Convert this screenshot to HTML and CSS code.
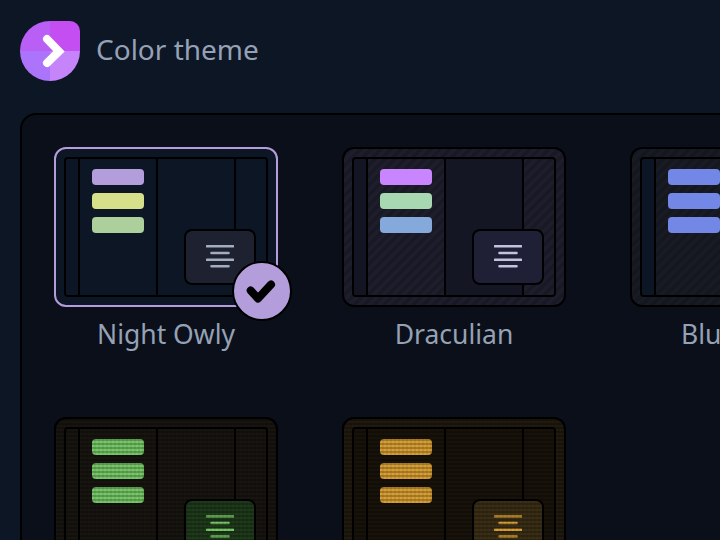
FILE: index.html
```html
<!DOCTYPE html>
<html lang="en">
<head>
    <meta charset="UTF-8">
    <meta name="viewport" content="width=device-width, initial-scale=1.0">
    <title>Color theme</title>
    <link rel="stylesheet" href="styles.css">
</head>
<body>

    <svg class="sprite" width="0" height="0">
        <symbol id="menu-lines" viewBox="0 0 28 24">
            <path d="M1 1.3H27M5.5 8H22.5M1 14.7H27M5.5 21.3H22.5" fill="none" stroke="currentColor" stroke-width="2.6" stroke-linecap="round"/>
        </symbol>
    </svg>

    <header class="header">
        <svg class="logo" width="60" height="60" viewBox="0 0 60 60">
            <defs>
                <clipPath id="logo-shape">
                    <path d="M30 0H50A10 10 0 0 1 60 10V30A30 30 0 0 1 0 30A30 30 0 0 1 30 0Z"/>
                </clipPath>
            </defs>
            <g clip-path="url(#logo-shape)">
                <rect width="30" height="30" fill="#b95ff5"/>
                <rect x="30" width="30" height="30" fill="#c44ef2"/>
                <rect y="30" width="30" height="30" fill="#ab74fb"/>
                <rect x="30" y="30" width="30" height="30" fill="#c684fa"/>
            </g>
            <path d="M27 18L39 30.5L27 42" fill="none" stroke="#fff" stroke-width="8" stroke-linecap="round" stroke-linejoin="miter"/>
        </svg>
        <h1 class="title">Color theme</h1>
    </header>

    <main class="panel">
        <div class="theme-grid">

            <div class="theme theme-owl">
                <div class="card selected">
                    <div class="frame">
                        <div class="col"></div>
                        <div class="col col-list">
                            <span class="bar bar-a"></span>
                            <span class="bar bar-b"></span>
                            <span class="bar bar-c"></span>
                        </div>
                        <div class="col col-main"></div>
                        <div class="col col-side"></div>
                    </div>
                    <div class="fab"><svg width="28" height="24"><use href="#menu-lines"/></svg></div>
                    <div class="check">
                        <svg width="56" height="56" viewBox="0 0 56 56">
                            <path d="M16.7 27.5L24 35.5L37 21.5" fill="none" stroke="#000" stroke-width="8" stroke-linecap="round" stroke-linejoin="round"/>
                        </svg>
                    </div>
                </div>
                <div class="name">Night Owly</div>
            </div>

            <div class="theme theme-dracula">
                <div class="card">
                    <div class="frame">
                        <div class="col"></div>
                        <div class="col col-list">
                            <span class="bar bar-a"></span>
                            <span class="bar bar-b"></span>
                            <span class="bar bar-c"></span>
                        </div>
                        <div class="col col-main"></div>
                        <div class="col col-side"></div>
                    </div>
                    <div class="fab"><svg width="28" height="24"><use href="#menu-lines"/></svg></div>
                </div>
                <div class="name">Draculian</div>
            </div>

            <div class="theme theme-blue">
                <div class="card">
                    <div class="frame">
                        <div class="col"></div>
                        <div class="col col-list">
                            <span class="bar bar-a"></span>
                            <span class="bar bar-b"></span>
                            <span class="bar bar-c"></span>
                        </div>
                        <div class="col col-main"></div>
                        <div class="col col-side"></div>
                    </div>
                    <div class="fab"><svg width="28" height="24"><use href="#menu-lines"/></svg></div>
                </div>
                <div class="name">Blueberry</div>
            </div>

            <div class="theme theme-green">
                <div class="card crt">
                    <div class="frame">
                        <div class="col"></div>
                        <div class="col col-list">
                            <span class="bar bar-a"></span>
                            <span class="bar bar-b"></span>
                            <span class="bar bar-c"></span>
                        </div>
                        <div class="col col-main"></div>
                        <div class="col col-side"></div>
                    </div>
                    <div class="fab"><svg width="28" height="24"><use href="#menu-lines"/></svg></div>
                </div>
            </div>

            <div class="theme theme-amber">
                <div class="card crt">
                    <div class="frame">
                        <div class="col"></div>
                        <div class="col col-list">
                            <span class="bar bar-a"></span>
                            <span class="bar bar-b"></span>
                            <span class="bar bar-c"></span>
                        </div>
                        <div class="col col-main"></div>
                        <div class="col col-side"></div>
                    </div>
                    <div class="fab"><svg width="28" height="24"><use href="#menu-lines"/></svg></div>
                </div>
            </div>

        </div>
    </main>

</body>
</html>
```

FILE: styles.css
```css
html,
body {
    height: 540px;
    overflow: hidden;
}

body {
    font-family: "Noto Sans", sans-serif;
    background-color: #0d1624;
    color: #95a1b5;
    margin: 0;
    padding: 21px 0 0 20px;
    box-sizing: border-box;
}

.sprite {
    position: absolute;
}

.header {
    display: flex;
    align-items: center;
    gap: 16px;
    margin-bottom: 32px;
}

.logo {
    display: block;
    flex: none;
}

.title {
    margin: 0;
    font-size: 28px;
    font-weight: 400;
    line-height: 60px;
    margin-top: -4px;
}

.panel {
    width: 860px;
    height: 800px;
    padding: 32px;
    background: #0a0f19;
    border: 2px solid #000;
    border-radius: 16px;
}

.theme-grid {
    display: grid;
    grid-template-columns: repeat(3, 224px);
    column-gap: 64px;
    grid-auto-rows: 270px;
}

.name {
    margin-top: 8px;
    font-size: 26.5px;
    line-height: 38px;
    text-align: center;
    white-space: nowrap;
}

.card {
    position: relative;
    height: 160px;
    box-sizing: border-box;
    padding: 8px;
    border: 2px solid #000;
    border-radius: 12px;
    background: var(--card);
}

    .card.selected {
        border-color: #b39ddb;
    }

.frame {
    display: grid;
    grid-template-columns: 14px 78px 78px 1fr;
    height: 100%;
    box-sizing: border-box;
    border: 2px solid #000;
    border-radius: 4px;
    overflow: hidden;
}

.col {
    background: var(--col-1);
    border-right: 2px solid #000;
}

.col-list {
    display: flex;
    flex-direction: column;
    gap: 8px;
    padding: 10px 12px;
    background: var(--col-2);
}

.col-main {
    background: var(--col-3);
}

.col-side {
    background: var(--col-2);
    border-right: none;
}

.bar {
    display: block;
    width: 52px;
    height: 16px;
    border-radius: 4px;
}

.bar-a {
    background: var(--bar-a);
}

.bar-b {
    background: var(--bar-b);
}

.bar-c {
    background: var(--bar-c);
}

.fab {
    position: absolute;
    right: 20px;
    bottom: 20px;
    display: flex;
    align-items: center;
    justify-content: center;
    width: 72px;
    height: 56px;
    box-sizing: border-box;
    border: 2px solid #000;
    border-radius: 8px;
    background: var(--fab);
    color: var(--fab-lines);
}

.check {
    position: absolute;
    right: -16px;
    bottom: -16px;
    width: 60px;
    height: 60px;
    box-sizing: border-box;
    border: 2px solid #000;
    border-radius: 50%;
    background: #b39ddb;
}

    .check svg {
        display: block;
    }

/* scanlines on the terminal style themes */
.crt::after {
    content: "";
    position: absolute;
    inset: -2px;
    border-radius: 12px;
    pointer-events: none;
    background:
        repeating-linear-gradient(0deg, rgba(0, 0, 0, 0.22) 0 2px, transparent 2px 4px),
        repeating-linear-gradient(90deg, rgba(0, 0, 0, 0.06) 0 2px, transparent 2px 4px);
}

.theme-owl {
    --card: #0d1624;
    --col-1: #0d1624;
    --col-2: #0d1624;
    --col-3: #0d1624;
    --bar-a: #b39ddb;
    --bar-b: #d6e08a;
    --bar-c: #accf9c;
    --fab: #1e2130;
    --fab-lines: #a2adbf;
}

.theme-dracula {
    --stripes: repeating-linear-gradient(135deg, #1e1d2b 0 3.5px, #191925 3.5px 7px);
    --card: var(--stripes);
    --col-1: #131622;
    --col-2: var(--stripes);
    --col-3: #151624;
    --bar-a: #c885fd;
    --bar-b: #a8d8b2;
    --bar-c: #84a9da;
    --fab: #1f1f35;
    --fab-lines: #c3c3de;
}

.theme-blue {
    --stripes: repeating-linear-gradient(135deg, #191b24 0 3.5px, #15171f 3.5px 7px);
    --card: var(--stripes);
    --col-1: #0d1624;
    --col-2: var(--stripes);
    --col-3: #0d1624;
    --bar-a: #7287e6;
    --bar-b: #7287e6;
    --bar-c: #7287e6;
    --fab: #1e2130;
    --fab-lines: #a2adbf;
}

.theme-green {
    --card: #181511;
    --col-1: #181511;
    --col-2: #181511;
    --col-3: #181511;
    --bar-a: #76c767;
    --bar-b: #76c767;
    --bar-c: #76c767;
    --fab: #1e3a1b;
    --fab-lines: #76c767;
}

.theme-amber {
    --card: #201a0f;
    --col-1: #18130a;
    --col-2: #18130a;
    --col-3: #18130a;
    --bar-a: #d69e34;
    --bar-b: #d69e34;
    --bar-c: #d69e34;
    --fab: #3b2e16;
    --fab-lines: #d69e34;
}
```
